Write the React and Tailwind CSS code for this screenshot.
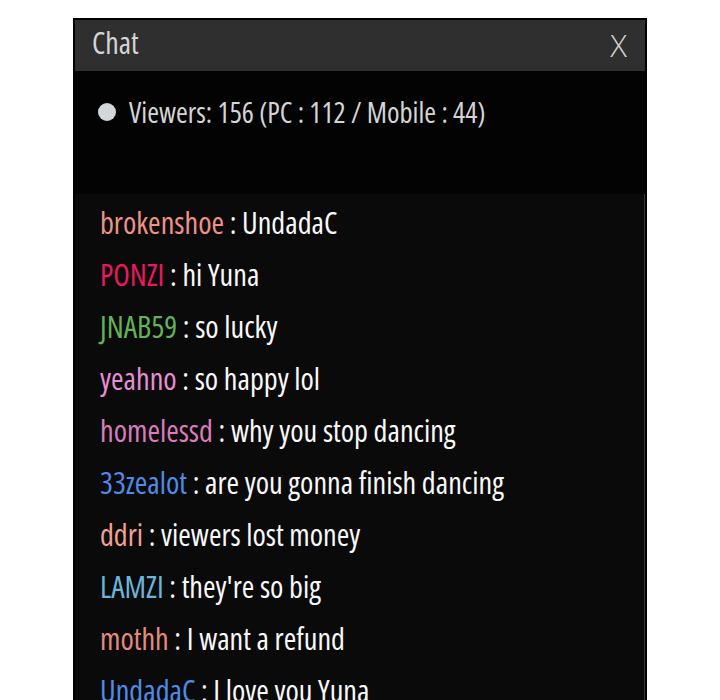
import React from "react";

const messages = [
  { name: "brokenshoe", color: "text-[#ee9287]", text: "UndadaC" },
  { name: "PONZI", color: "text-[#e8195f]", text: "hi Yuna" },
  { name: "JNAB59", color: "text-[#62b25a]", text: "so lucky" },
  { name: "yeahno", color: "text-[#e68ed4]", text: "so happy lol" },
  { name: "homelessd", color: "text-[#d97bbd]", text: "why you stop dancing" },
  { name: "33zealot", color: "text-[#4f8be6]", text: "are you gonna finish dancing" },
  { name: "ddri", color: "text-[#f3a193]", text: "viewers lost money" },
  { name: "LAMZI", color: "text-[#6ab6da]", text: "they're so big" },
  { name: "mothh", color: "text-[#e38a80]", text: "I want a refund" },
  { name: "UndadaC", color: "text-[#4f8be6]", text: "I love you Yuna" },
];

const App = () => {
  return (
    <div className="w-[720px] h-[700px] bg-white overflow-hidden pt-[18px] pl-[73px] font-['Open_Sans',sans-serif] font-stretch-[75%]">
      <div className="w-[574px] border-2 border-black bg-black">
        {/* Header */}
        <div className="h-[51px] bg-[#2f2f2f] flex items-center justify-between pl-[17px] pr-[18px] pb-[6px]">
          <span className="text-[30px] leading-none text-[#d4d4d4]">Chat</span>
          <span className="text-[31px] leading-none font-light font-stretch-normal text-[#d4d4d4] mt-[6px]">X</span>
        </div>

        {/* Viewers */}
        <div className="h-[123px] bg-[#030303] pt-[23px] pl-[23px]">
          <div className="flex items-center h-[36px]">
            <span className="w-[18px] h-[18px] rounded-full bg-[#d4d7d9]" />
            <span className="ml-[13px] text-[28.5px] leading-[36px] text-[#d4d4d4]">
              Viewers: 156 (PC : 112 / Mobile : 44)
            </span>
          </div>
        </div>

        {/* Messages */}
        <div className="bg-[#0a0a0a] pt-[3px] pl-[25px] h-[520px] border-r border-r-[#3a3a3a]">
          {messages.map((m, i) => (
            <div key={i} className="text-[30.3px] leading-[52px] whitespace-nowrap">
              <span className={m.color}>{m.name}</span>
              <span className="text-[#f8f8f8]"> : {m.text}</span>
            </div>
          ))}
        </div>
      </div>
    </div>
  );
};

export default App;
